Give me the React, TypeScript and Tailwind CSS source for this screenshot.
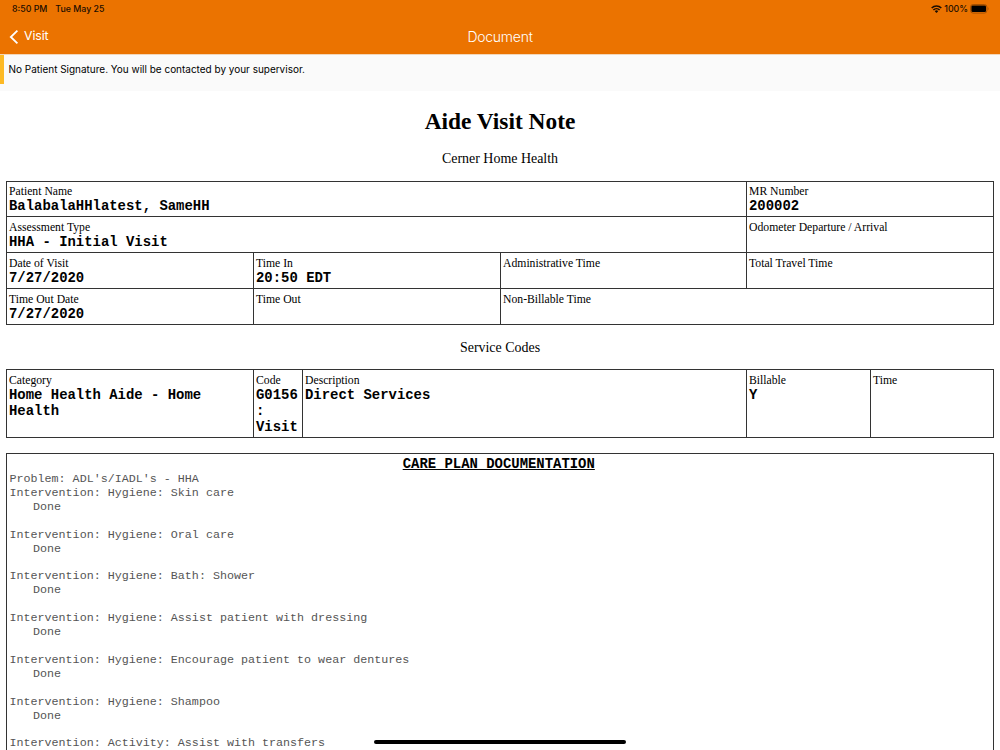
import type { ReactNode } from "react";

type FieldProps = { label: string; className: string; children?: ReactNode };

function Field({ label, className, children }: FieldProps) {
  return (
    <div className={`border-b border-r border-[#333] pl-[2px] ${className}`}>
      <div className="h-[13px] whitespace-nowrap text-[11.7px] leading-[13px]">{label}</div>
      <div className="font-['Liberation_Mono',monospace] text-[13.93px] font-bold leading-4">{children}</div>
    </div>
  );
}

const interventions = [
  { name: "Hygiene: Skin care", status: "Done" },
  { name: "Hygiene: Oral care", status: "Done" },
  { name: "Hygiene: Bath: Shower", status: "Done" },
  { name: "Hygiene: Assist patient with dressing", status: "Done" },
  { name: "Hygiene: Encourage patient to wear dentures", status: "Done" },
  { name: "Hygiene: Shampoo", status: "Done" },
  { name: "Activity: Assist with transfers", status: "" },
];

function StatusBar() {
  return (
    <div className="flex h-[18px] items-center justify-between pl-3 pr-[11px] text-[8.8px] font-medium text-[#1a0d00]">
      <div className="flex gap-[8px]">
        <span>8:50 PM</span>
        <span>Tue May 25</span>
      </div>
      <div className="flex items-center">
        <svg width="11" height="8" viewBox="0 0 11 8" fill="none" stroke="currentColor" strokeWidth="1.6">
          <path d="M0.7 3a6.8 6.8 0 0 1 9.6 0M2.4 5a4.4 4.4 0 0 1 6.2 0" />
          <path d="M5.5 7.9 3.8 6.2a2.4 2.4 0 0 1 3.4 0z" fill="currentColor" stroke="none" />
        </svg>
        <span className="ml-[2px]">100%</span>
        <svg className="ml-[2px]" width="19" height="10" viewBox="0 0 19 10">
          <rect x="0.5" y="0.5" width="16.4" height="8.6" rx="2.6" fill="none" stroke="#a85200" />
          <rect x="1.4" y="1.5" width="14.6" height="6.6" rx="1.3" fill="#000" />
          <path d="M17.8 3.3c1 .4 1 2.6 0 3z" fill="#a85200" />
        </svg>
      </div>
    </div>
  );
}

export default function App() {
  return (
    <div className="relative flex h-[750px] w-[1000px] flex-col overflow-hidden bg-white font-['Liberation_Serif',serif] text-black">
      <header className="h-[54px] shrink-0 bg-[#eb7300] font-['Inter',sans-serif]">
        <StatusBar />
        <div className="grid h-9 grid-cols-3 items-center text-white">
          <div className="flex items-center pl-[9px] pt-px text-[12.3px]">
            <svg width="10" height="14" viewBox="0 0 10 14" fill="none" stroke="currentColor" strokeWidth="1.8">
              <path d="M8.4 0.7 1.8 7l6.6 6.3" />
            </svg>
            <span className="ml-[5px] tracking-[-0.1px]">Visit</span>
          </div>
          <div className="text-center text-[14px] font-light tracking-[-0.25px]">Document</div>
        </div>
      </header>
      <div className="h-[37px] shrink-0 border-t border-[#f3d6b8] bg-[#fafafa] font-['Inter',sans-serif]">
        <div className="flex h-[29px] items-center border-l-4 border-[#fdb924] pl-[4.5px] text-[9.97px]">
          No Patient Signature. You will be contacted by your supervisor.
        </div>
      </div>
      <main className="flex flex-col px-[6px]">
        <h1 className="mt-[17px] text-center text-[23.4px] font-bold leading-[27px]">Aide Visit Note</h1>
        <p className="mt-[16px] text-center text-[13.95px] leading-4">Cerner Home Health</p>
        <section className="mt-[14px] grid grid-cols-[247px_247px_246px_247px] grid-rows-[35px_36px_36px_36px] border-l border-t border-[#333]">
          <Field label="Patient Name" className="col-span-3 pt-[3px]">BalabalaHHlatest, SameHH</Field>
          <Field label="MR Number" className="pt-[3px]">200002</Field>
          <Field label="Assessment Type" className="col-span-3 pt-1">HHA - Initial Visit</Field>
          <Field label="Odometer Departure / Arrival" className="pt-1" />
          <Field label="Date of Visit" className="pt-1">7/27/2020</Field>
          <Field label="Time In" className="pt-1">20:50 EDT</Field>
          <Field label="Administrative Time" className="pt-1" />
          <Field label="Total Travel Time" className="pt-1" />
          <Field label="Time Out Date" className="pt-1">7/27/2020</Field>
          <Field label="Time Out" className="pt-1" />
          <Field label="Non-Billable Time" className="col-span-2 pt-1" />
        </section>
        <p className="mt-[15px] text-center text-[13.95px] leading-4">Service Codes</p>
        <section className="mt-[13px] grid h-[69px] grid-cols-[247px_49px_444px_124px_123px] border-l border-t border-[#333]">
          <Field label="Category" className="pr-8 pt-1">Home Health Aide - Home Health</Field>
          <Field label="Code" className="pt-1">G0156<br />:<br />Visit</Field>
          <Field label="Description" className="pt-1">Direct Services</Field>
          <Field label="Billable" className="pt-1">Y</Field>
          <Field label="Time" className="pt-1" />
        </section>
        <section className="mt-[15px] h-[310px] border border-[#333] pl-[2.5px] pt-[2px] font-['Liberation_Mono',monospace]">
          <h2 className="mb-px pr-[5px] text-center text-[13.93px] font-bold leading-4 underline">CARE PLAN DOCUMENTATION</h2>
          <div className="text-[11.69px] leading-[13.92px] text-[#555]">
            <div>Problem: ADL's/IADL's - HHA</div>
            {interventions.map(({ name, status }) => (
              <div key={name} className="mb-[13.92px]">
                <div>Intervention: {name}</div>
                {status && <div className="pl-[23.4px]">{status}</div>}
              </div>
            ))}
          </div>
        </section>
      </main>
      <div className="absolute bottom-[6px] left-[374px] h-[4px] w-[252px] rounded-full bg-black" />
    </div>
  );
}
